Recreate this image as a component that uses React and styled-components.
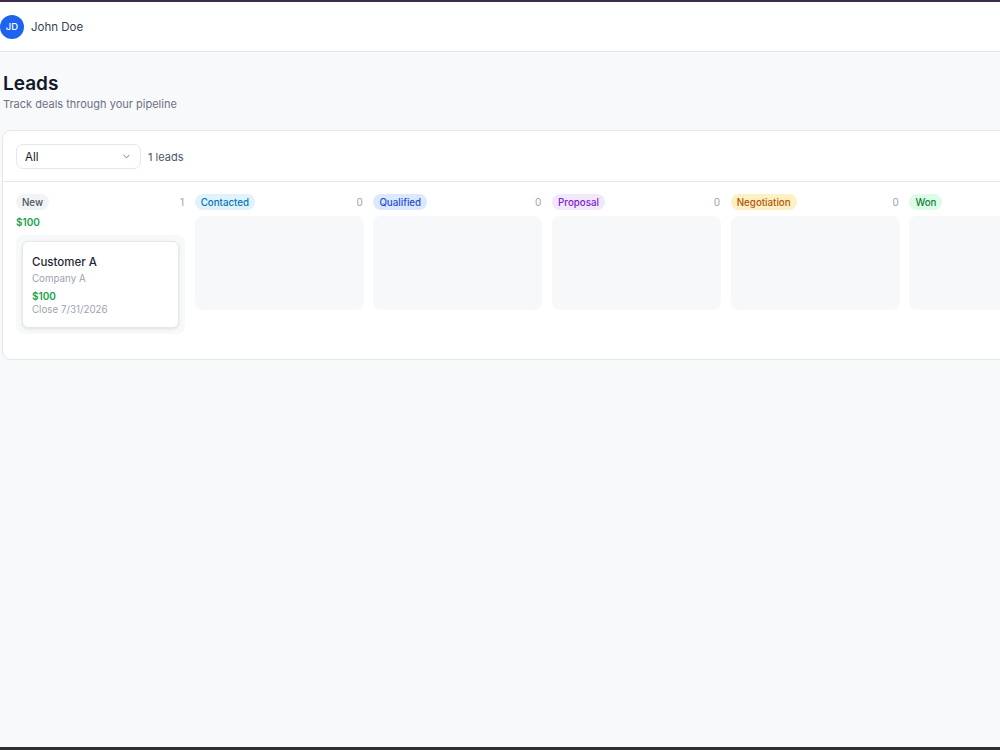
import React from "react";
import styled, { createGlobalStyle } from "styled-components";

const Global = createGlobalStyle`
  html, body { margin: 0; padding: 0; }
  body {
    font-family: Inter, "Noto Sans", "Liberation Sans", sans-serif;
    background: #f8f9fb;
    color: #111827;
    overflow: hidden;
  }
  * { box-sizing: border-box; }
`;

const Page = styled.div`
  height: 750px;
  display: flex;
  flex-direction: column;
  border-top: 2px solid #3a2e4a;
  border-bottom: 3px solid #2f2f33;
  background: #f8f9fb;
  overflow: hidden;
`;

const Header = styled.header`
  height: 50px;
  flex: none;
  display: flex;
  align-items: center;
  gap: 7px;
  background: #ffffff;
  border-bottom: 1px solid #e5e7eb;
`;

const Avatar = styled.div`
  width: 24px;
  height: 24px;
  border-radius: 50%;
  background: #1d63f0;
  color: #fff;
  font-size: 9.5px;
  font-weight: 500;
  display: flex;
  align-items: center;
  justify-content: center;
`;

const UserName = styled.span`
  font-size: 11.5px;
  color: #374151;
`;

const Main = styled.main`
  flex: 1;
  padding: 20px 0 0 2px;
  min-width: 0;
`;

const Title = styled.h1`
  margin: 0 0 0 1px;
  font-size: 19px;
  font-weight: 600;
  line-height: 24px;
  color: #111827;
`;

const Subtitle = styled.p`
  margin: 0 0 0 1px;
  font-size: 11px;
  line-height: 16px;
  color: #6b7280;
`;

const Panel = styled.section`
  margin-top: 18px;
  width: 1060px;
  background: #fff;
  border: 1px solid #e5e7eb;
  border-radius: 9px;
`;

const Toolbar = styled.div`
  display: flex;
  align-items: center;
  gap: 7px;
  padding: 13px 13px 12px;
  border-bottom: 1px solid #e5e7eb;
`;

const Select = styled.div`
  width: 125px;
  height: 25px;
  border: 1px solid #e5e7eb;
  border-radius: 7px;
  display: flex;
  align-items: center;
  justify-content: space-between;
  padding: 0 8px 0 8px;
  font-size: 11.5px;
  color: #111827;
`;

const Count = styled.span`
  font-size: 11px;
  color: #4b5563;
`;

const Board = styled.div`
  display: grid;
  grid-template-columns: repeat(6, 169px);
  column-gap: 9.7px;
  align-items: start;
  padding: 12px 13px 25px;
`;

const Column = styled.div`
  display: flex;
  flex-direction: column;
  gap: 6px;
`;

const ColumnHead = styled.div`
  display: flex;
  align-items: center;
  justify-content: space-between;
  height: 16px;
`;

const Badge = styled.span`
  display: inline-flex;
  align-items: center;
  height: 16px;
  padding: 0 6px;
  border-radius: 999px;
  font-size: 9.75px;
  font-weight: 500;
  background: ${(p) => p.$bg};
  color: ${(p) => p.$fg};
`;

const ColCount = styled.span`
  font-size: 10px;
  color: #9ca3af;
  padding-right: 1px;
`;

const Total = styled.div`
  font-size: 10px;
  font-weight: 600;
  color: #16a34a;
  line-height: 12px;
  margin-bottom: 1px;
`;

const Lane = styled.div`
  border-radius: 8px;
  background: #f7f8fa;
  min-height: 94px;
  padding: 6px;
`;

const LeadCard = styled.div`
  background: #fff;
  border: 1px solid #e5e7eb;
  border-radius: 6px;
  box-shadow: 0 1px 3px rgba(0, 0, 0, 0.1);
  padding: 13px 9px 10px;
  display: flex;
  flex-direction: column;
`;

const LeadName = styled.div`
  font-size: 11.5px;
  font-weight: 500;
  color: #1f2937;
  line-height: 15px;
`;

const LeadMeta = styled.div`
  font-size: 9.75px;
  color: #9ca3af;
  line-height: 14px;
  margin-top: ${(p) => p.$mt || 0}px;
`;

const LeadValue = styled.div`
  font-size: 10px;
  font-weight: 600;
  color: #16a34a;
  line-height: 14px;
  margin-top: 3px;
`;

const stages = [
  { name: "New", bg: "#f1f3f5", fg: "#4b5563", count: 1 },
  { name: "Contacted", bg: "#e0f2fe", fg: "#0277b5", count: 0 },
  { name: "Qualified", bg: "#dbe8fe", fg: "#1d4ed8", count: 0 },
  { name: "Proposal", bg: "#f1e8fe", fg: "#7e22ce", count: 0 },
  { name: "Negotiation", bg: "#fdf1c4", fg: "#b45309", count: 0 },
  { name: "Won", bg: "#dcfce7", fg: "#15803d", count: 0 },
];

const Chevron = () => (
  <svg width="11" height="11" viewBox="0 0 24 24" fill="none" stroke="#6b7280" strokeWidth="2" strokeLinecap="round" strokeLinejoin="round">
    <path d="m6 9 6 6 6-6" />
  </svg>
);

export default function App() {
  return (
    <>
      <Global />
      <Page>
        <Header>
          <Avatar>JD</Avatar>
          <UserName>John Doe</UserName>
        </Header>
        <Main>
          <Title>Leads</Title>
          <Subtitle>Track deals through your pipeline</Subtitle>
          <Panel>
            <Toolbar>
              <Select>
                <span>All</span>
                <Chevron />
              </Select>
              <Count>1 leads</Count>
            </Toolbar>
            <Board>
              {stages.map((s) => (
                <Column key={s.name}>
                  <ColumnHead>
                    <Badge $bg={s.bg} $fg={s.fg}>{s.name}</Badge>
                    <ColCount>{s.count}</ColCount>
                  </ColumnHead>
                  {s.count > 0 ? (
                    <>
                      <Total>$100</Total>
                      <Lane>
                        <LeadCard>
                          <LeadName>Customer A</LeadName>
                          <LeadMeta $mt={2}>Company A</LeadMeta>
                          <LeadValue>$100</LeadValue>
                          <LeadMeta>Close 7/31/2026</LeadMeta>
                        </LeadCard>
                      </Lane>
                    </>
                  ) : (
                    <Lane />
                  )}
                </Column>
              ))}
            </Board>
          </Panel>
        </Main>
      </Page>
    </>
  );
}
